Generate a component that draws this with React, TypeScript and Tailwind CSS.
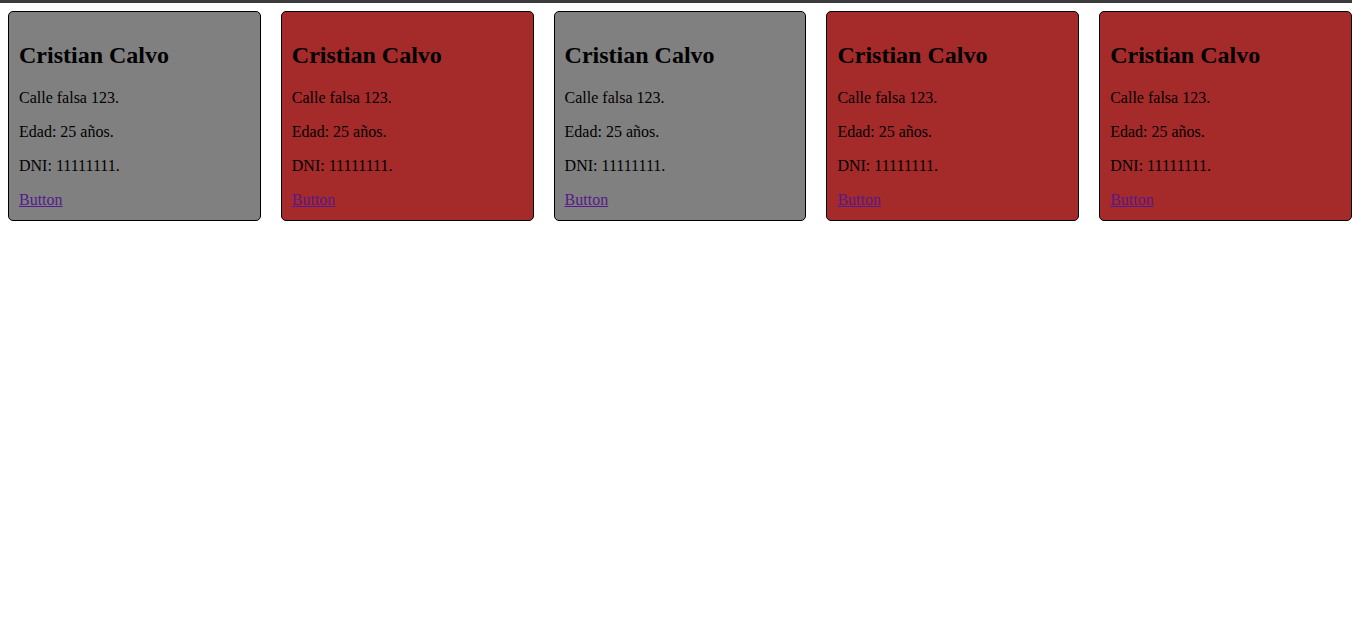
const cards = ["gray", "red", "gray", "red", "red"];

function Card({ tone }: { tone: string }) {
  return (
    <div
      className={`flex-1 rounded-[5px] border border-black px-[10px] pt-[10px] pb-[11px] ${
        tone === "red" ? "bg-[#a52a2a]" : "bg-[#808080]"
      }`}
    >
      <h2 className="mt-[19px] mb-[20px] text-[24px] font-bold leading-[28px]">Cristian Calvo</h2>
      <p className="mb-[16px] text-[16px] leading-[18px]">Calle falsa 123.</p>
      <p className="mb-[16px] text-[16px] leading-[18px]">Edad: 25 años.</p>
      <p className="mb-[16px] text-[16px] leading-[18px]">DNI: 11111111.</p>
      <div className="text-[16px] leading-[18px]">
        <a href="#" className="text-[#551a8b] underline">
          Button
        </a>
      </div>
    </div>
  );
}

export default function App() {
  return (
    <div className="min-h-[634px] bg-white text-black" style={{ fontFamily: '"Liberation Serif", serif' }}>
      <div className="h-[3px] bg-[#3c3c3c]" />
      <div className="mt-[8px] flex items-start gap-5 pl-2">
        {cards.map((tone, i) => (
          <Card key={i} tone={tone} />
        ))}
      </div>
    </div>
  );
}
